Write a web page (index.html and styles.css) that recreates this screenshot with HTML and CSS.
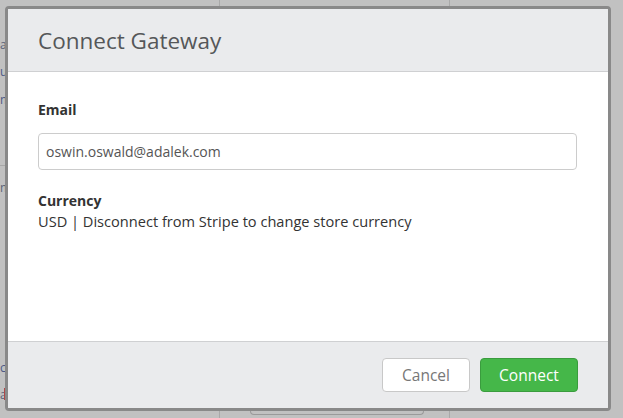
FILE: index.html
```html
<!DOCTYPE html>
<html>
<head>
<meta charset="utf-8">
<link rel="stylesheet" href="styles.css">
</head>
<body>
<div class="page">
  <div class="page-col page-col-left">
    <span class="frag f1">a</span>
    <span class="frag f2">u</span>
    <span class="frag f3">m</span>
    <span class="frag-line"></span>
    <span class="frag f4">m</span>
    <span class="frag f5">c</span>
    <span class="frag f6">a</span>
    <span class="frag-red"></span>
  </div>
  <div class="page-divider d1"></div>
  <div class="page-divider d2"></div>
  <div class="page-btn"></div>
</div>
<div class="modal">
  <div class="modal-header">
    <h1 class="modal-title">Connect Gateway</h1>
  </div>
  <div class="modal-body">
    <label class="field-label" for="email">Email</label>
    <input class="field-input" id="email" type="text" value="oswin.oswald@adalek.com">
    <div class="field-label currency-label">Currency</div>
    <div class="currency-text">USD | Disconnect from Stripe to change store currency</div>
  </div>
  <div class="modal-footer">
    <button class="btn btn-cancel">Cancel</button>
    <button class="btn btn-connect">Connect</button>
  </div>
</div>
</body>
</html>
```
FILE: styles.css
```css
html, body {
  margin: 0;
  padding: 0;
}
body {
  width: 623px;
  height: 418px;
  overflow: hidden;
  background: #c1c1c1;
  font-family: "Open Sans", Lato, sans-serif;
  position: relative;
}
.page {
  position: absolute;
  inset: 0;
}
.page-col-left {
  position: absolute;
  left: 0;
  top: 0;
  width: 10px;
  height: 418px;
}
.frag {
  position: absolute;
  left: 0;
  font-size: 12px;
  line-height: 14px;
  color: #5a6478;
}
.f1 { top: 38px; }
.f2 { top: 65px; color: #4c5a86; }
.f3 { top: 93px; color: #4c5a86; }
.f4 { top: 181px; }
.f5 { top: 361px; color: #4c5a86; }
.f6 { top: 388px; }
.frag-red {
  position: absolute;
  left: 4px;
  top: 388px;
  width: 1px;
  height: 12px;
  background: #b04848;
}
.frag-line {
  position: absolute;
  left: 0;
  top: 165px;
  width: 8px;
  height: 1px;
  background: #a8a8a8;
}
.page-divider {
  position: absolute;
  top: 0;
  width: 1px;
  height: 418px;
  background: #a9a9a9;
}
.d1 { left: 219px; }
.d2 { left: 449px; }
.page-btn {
  position: absolute;
  left: 250px;
  top: 400px;
  width: 172px;
  height: 14px;
  border: 1px solid #9a9a9a;
  border-top: none;
  border-radius: 0 0 4px 4px;
}
.modal {
  position: absolute;
  left: 5px;
  top: 6px;
  width: 600px;
  height: 399px;
  border: 3px solid #898989;
  border-radius: 4px;
  background: #fff;
  display: flex;
  flex-direction: column;
  overflow: hidden;
}
.modal-header {
  height: 63px;
  box-sizing: border-box;
  background: #eaebed;
  border-bottom: 1px solid #cfd0d2;
  padding: 0 30px;
  display: flex;
  align-items: center;
}
.modal-title {
  margin: 0;
  font-size: 22.5px;
  font-weight: 400;
  color: #555759;
}
.modal-body {
  flex: 1;
  padding: 28px 30px 0;
  display: flex;
  flex-direction: column;
}
.field-label {
  font-size: 14px;
  font-weight: 700;
  color: #333;
  line-height: 20px;
}
.field-input {
  margin-top: 13px;
  width: 539px;
  height: 37px;
  box-sizing: border-box;
  border: 1px solid #cccccc;
  border-radius: 4px;
  padding: 0 7px;
  font-family: inherit;
  font-size: 14px;
  color: #555;
  outline: none;
}
.currency-label {
  margin-top: 21px;
}
.currency-text {
  font-size: 14.6px;
  color: #333;
  line-height: 20px;
}
.modal-footer {
  height: 67px;
  box-sizing: border-box;
  background: #eaebed;
  border-top: 1px solid #cfd0d2;
  display: flex;
  justify-content: flex-end;
  align-items: center;
  gap: 10px;
  padding: 0 30px 0 0;
}
.btn {
  height: 34px;
  box-sizing: border-box;
  border-radius: 4px;
  font-family: inherit;
  font-size: 15.5px;
  padding: 0;
  cursor: pointer;
}
.btn-cancel {
  width: 88px;
  background: #fff;
  border: 1px solid #c8c8c8;
  color: #777;
}
.btn-connect {
  width: 98px;
  background: #45b749;
  border: 1px solid #3a9c3e;
  color: #fff;
}
```
